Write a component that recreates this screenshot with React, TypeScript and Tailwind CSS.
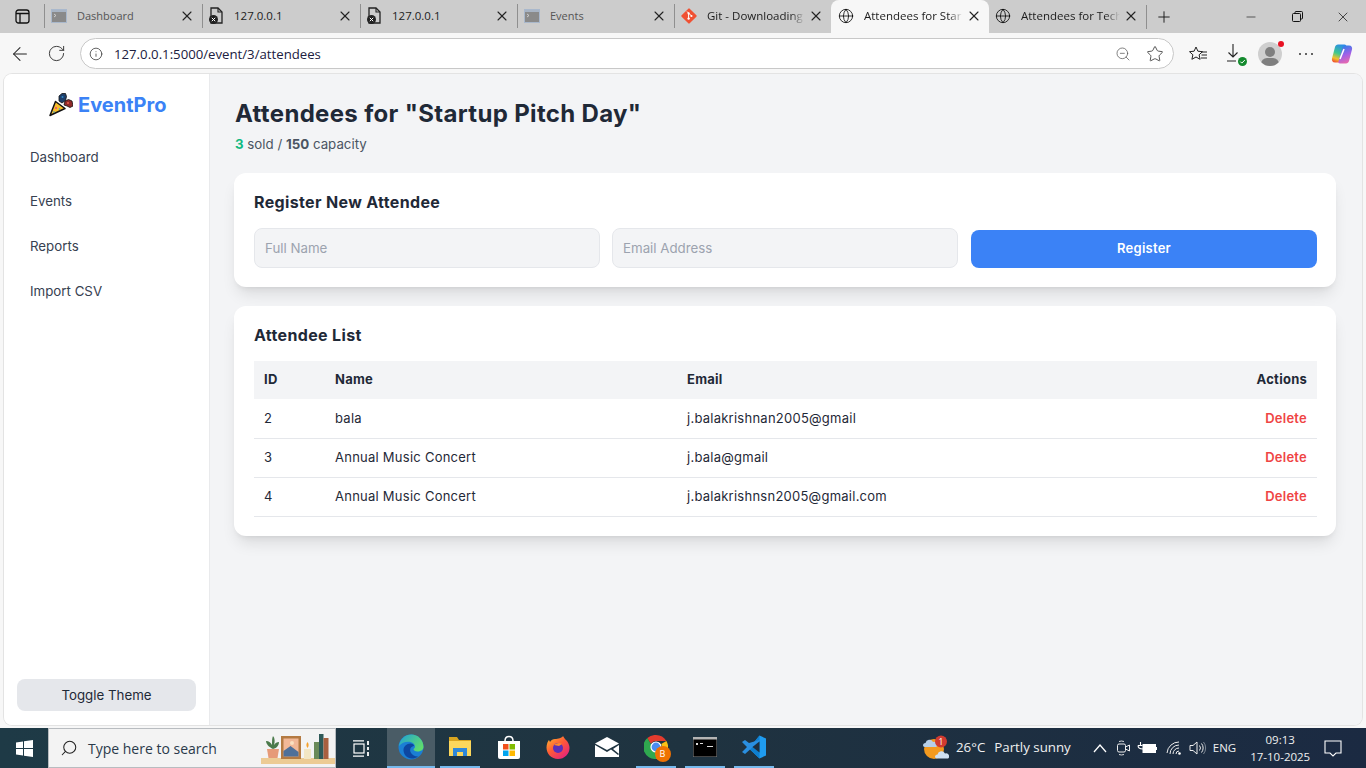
import { ArrowLeft, RotateCw, Info, ZoomOut, Star, X, Plus, Minus, Globe, Search } from 'lucide-react'

const ui = "font-['Open_Sans',sans-serif]"
const page = "font-['Inter',sans-serif]"

function TermIcon() {
  return (
    <svg width="16" height="14" viewBox="0 0 16 14">
      <rect x="0.5" y="0.5" width="15" height="13" fill="#8a8a8a" stroke="#a9b8cc" />
      <rect x="1" y="1" width="14" height="2" fill="#a8b4c4" />
      <path d="M3 5l2 1.5L3 8" stroke="#ddd" fill="none" strokeWidth="0.8" />
    </svg>
  )
}

function FileErrIcon() {
  return (
    <svg width="16" height="18" viewBox="0 0 16 18">
      <path d="M3 1h7l4 4v11H3z" fill="none" stroke="#222" strokeWidth="1.3" />
      <path d="M10 1v4h4" fill="none" stroke="#222" strokeWidth="1.1" />
      <circle cx="5.5" cy="12.5" r="4.5" fill="#222" />
      <path d="M3.8 10.8l3.4 3.4M7.2 10.8l-3.4 3.4" stroke="#fff" strokeWidth="1" />
    </svg>
  )
}

function GitIcon() {
  return (
    <svg width="16" height="16" viewBox="0 0 16 16">
      <rect x="2.3" y="2.3" width="11.4" height="11.4" rx="1" fill="#f05133" transform="rotate(45 8 8)" />
      <path d="M6 3.5l4.2 4.2M7.6 5.6v5" stroke="#fff" strokeWidth="1" />
      <circle cx="7.6" cy="5.4" r="1.1" fill="#fff" />
      <circle cx="7.6" cy="10.6" r="1.2" fill="#fff" />
      <circle cx="10.4" cy="8" r="1.1" fill="#fff" />
    </svg>
  )
}

type TabInfo = { title: string; icon: React.ReactNode; muted?: boolean; active?: boolean; fade?: boolean; iconCls: string; w: string }

const tabs: TabInfo[] = [
  { title: 'Dashboard', icon: <TermIcon />, muted: true, iconCls: 'pl-[6px]', w: 'w-[158px]' },
  { title: '127.0.0.1', icon: <FileErrIcon />, iconCls: 'pl-[5px]', w: 'w-[158px]' },
  { title: '127.0.0.1', icon: <FileErrIcon />, iconCls: 'pl-[5px]', w: 'w-[157px]' },
  { title: 'Events', icon: <TermIcon />, muted: true, iconCls: 'pl-[6px]', w: 'w-[157px]' },
  { title: 'Git - Downloading', icon: <GitIcon />, fade: true, iconCls: 'pl-[6px]', w: 'w-[157px]' },
  { title: 'Attendees for Star', icon: <Globe size={18} strokeWidth={1.2} />, active: true, fade: true, iconCls: 'pl-[6px]', w: 'w-[158px]' },
  { title: 'Attendees for Tech', icon: <Globe size={18} strokeWidth={1.2} />, fade: true, iconCls: 'pl-[5px]', w: 'w-[157px]' },
]

function Tab({ t, noLine }: { t: TabInfo; noLine: boolean }) {
  return (
    <div className={`${t.w} h-[33px] flex items-center shrink-0 ${t.active ? 'bg-[#f7f7f7] rounded-t-lg' : ''}`}>
      <div className={`flex-1 min-w-0 h-[24px] mt-[-1px] flex items-center pr-[7px] ${t.iconCls} ${noLine ? 'border-l border-transparent' : 'border-l border-[#8f8f8f]'}`}>
        <span className="w-[16px] flex justify-center shrink-0">{t.icon}</span>
        <span className={`flex-1 min-w-0 whitespace-nowrap ${t.muted ? 'ml-[10px] text-[11px] text-[#555]' : 'ml-[10px] text-[11.5px] text-[#1c1c1c]'} ${t.fade ? '[mask-image:linear-gradient(to_right,black_85%,transparent)]' : ''}`}>{t.title}</span>
        <X size={16} strokeWidth={1.6} className="shrink-0 ml-[3px] text-[#222]" />
      </div>
    </div>
  )
}

function PartyLogo() {
  return (
    <svg width="24" height="24" viewBox="0 0 24 24">
      <path d="M6.500 8.500L16 15.500 1 22.500z" fill="#f8bd2a" stroke="#111" strokeWidth="1.500" strokeLinejoin="round" />
      <circle cx="7" cy="15" r="0.9" fill="#e8388a" />
      <circle cx="5" cy="19" r="0.8" fill="#2a9fd8" />
      <circle cx="10.500" cy="16" r="0.8" fill="#2a9fd8" />
      <path d="M10 3l3-2.500h3.500l1 3-1 4-3.500 2.500-3-2z" fill="#1f3f6b" stroke="#111" strokeWidth="0.800" />
      <path d="M15 12l1-4 3.500-1.500 3.500 1.500 1 5-3 1.500-3-1.500z" fill="#8f2a2a" stroke="#111" strokeWidth="0.800" />
      <circle cx="19" cy="10" r="1" fill="#e8604c" />
      <circle cx="13.500" cy="4" r="1" fill="#2f88c8" />
    </svg>
  )
}

const navItems = [
  { label: 'Dashboard', cls: 'h-[44px] pt-[2px]' },
  { label: 'Events', cls: 'h-[45px]' },
  { label: 'Reports', cls: 'h-[45px]' },
  { label: 'Import CSV', cls: 'h-[45px]' },
]

const attendees = [
  { id: 2, name: 'bala', email: 'j.balakrishnan2005@gmail', h: 'h-[39px]' },
  { id: 3, name: 'Annual Music Concert', email: 'j.bala@gmail', h: 'h-[39px]' },
  { id: 4, name: 'Annual Music Concert', email: 'j.balakrishnsn2005@gmail.com', h: 'h-[39px]' },
]

function Sidebar() {
  return (
    <aside className="w-[206px] shrink-0 bg-white border-r border-[#e9eaec] flex flex-col">
      <div className="h-[61px] pt-[19px] pl-[45px] flex items-start gap-[5px]">
        <PartyLogo />
        <span className="text-[20px] leading-[25px] font-bold text-[#3b82f6]">EventPro</span>
      </div>
      <nav className="pl-[26px] flex flex-col">
        {navItems.map(n => (
          <div key={n.label} className={`${n.cls} flex items-center text-[13.3px] text-[#374151]`}>{n.label}</div>
        ))}
      </nav>
      <div className="mt-auto px-[13px] pb-[14px]">
        <button className="w-full h-[32px] pt-[1px] rounded-lg bg-[#e5e7eb] text-[13.3px] text-[#1f2937]">Toggle Theme</button>
      </div>
    </aside>
  )
}

function Main() {
  return (
    <main className="flex-1 min-w-0 bg-[#f3f4f6] pl-[24px] pr-[26px] pt-[25px]">
      <h1 className="ml-[1px] text-[24px] leading-[30px] font-bold text-[#1f2937] tracking-[0.33px]">Attendees for "Startup Pitch Day"</h1>
      <p className="ml-[1px] mt-[5px] text-[13.3px] leading-[20px] text-[#4b5563]">
        <span className="font-bold text-[#10b981]">3</span> sold / <span className="font-bold">150</span> capacity
      </p>
      <section className="mt-[19px] bg-white rounded-xl shadow-lg h-[114px] pl-[20px] pr-[19px] pt-[18px]">
        <h2 className="text-[16px] leading-[22px] font-bold text-[#1f2937] tracking-[0.35px]">Register New Attendee</h2>
        <div className="mt-[15px] flex items-end">
          <input readOnly placeholder="Full Name" className="w-[346px] h-[40px] px-[10px] rounded-lg bg-[#f3f4f6] border border-[#e5e7eb] text-[13.3px] placeholder:text-[#9ca3af]" />
          <input readOnly placeholder="Email Address" className="ml-[12px] w-[346px] h-[40px] px-[10px] rounded-lg bg-[#f3f4f6] border border-[#e5e7eb] text-[13.3px] placeholder:text-[#9ca3af]" />
          <button className="ml-[13px] w-[346px] h-[38px] rounded-lg bg-[#3b82f6] text-white text-[13px] font-semibold tracking-[0.25px]">Register</button>
        </div>
      </section>
      <section className="mt-[19px] bg-white rounded-xl shadow-lg h-[230px] px-[20px] pt-[18px]">
        <h2 className="text-[16px] leading-[22px] font-bold text-[#1f2937] tracking-[0.35px]">Attendee List</h2>
        <table className="mt-[15px] w-[1063px] table-fixed text-[13px] tracking-[0.25px] border-collapse">
          <thead>
            <tr className="bg-[#f3f4f6] h-[38px] text-[#1f2937]">
              <th className="w-[81px] pl-[10px] text-left font-bold">ID</th>
              <th className="w-[352px] text-left font-bold">Name</th>
              <th className="text-left font-bold">Email</th>
              <th className="w-[120px] pr-[10px] text-right font-bold">Actions</th>
            </tr>
          </thead>
          <tbody>
            {attendees.map(a => (
              <tr key={a.id} className={`${a.h} border-b border-[#e5e7eb] text-[#1f2937]`}>
                <td className="pl-[10px]">{a.id}</td>
                <td>{a.name}</td>
                <td>{a.email}</td>
                <td className="pr-[10px] text-right font-semibold text-[#ef4444]">Delete</td>
              </tr>
            ))}
          </tbody>
        </table>
      </section>
    </main>
  )
}

function EdgeIcon() {
  return (
    <svg width="26" height="26" viewBox="0 0 26 26">
      <defs>
        <linearGradient id="edgeTop" x1="0" y1="0" x2="1" y2="0.6">
          <stop offset="0" stopColor="#1f9fd8" />
          <stop offset="1" stopColor="#5fdc6e" />
        </linearGradient>
      </defs>
      <circle cx="13" cy="13" r="12.500" fill="#1b7fd4" />
      <path d="M1 12C2 5 7 .5 13.500 .5 20 .5 25.500 6 25.500 13c0 3-3 4.500-6 4.500-2.500 0-4-1-4-2.500 2-1 2-3.500 0-5.500-3-3-11-2.500-14.500 2.500z" fill="url(#edgeTop)" />
      <path d="M5.500 16c0-3.500 3-6.500 7-6.500 2 0 3.500 1 3.500 2.500-3 .5-4.500 2.500-3.500 6 1 2.500 4 4.500 7.500 4.500-2 1.500-4 2-6 2-5 0-8.500-4-8.500-8.500z" fill="#0d47a1" />
    </svg>
  )
}

function FolderIcon() {
  return (
    <svg width="24" height="22" viewBox="0 0 24 22">
      <path d="M1 1h8l2 3h12v16H1z" fill="#d9a520" />
      <rect x="1" y="5" width="22" height="15" fill="#fbd75c" />
      <path d="M5 12h14v8h-4v-4H9v4H5z" fill="#2f88d8" />
    </svg>
  )
}

function StoreIcon() {
  return (
    <svg width="24" height="24" viewBox="0 0 24 24">
      <path d="M8 6c0-6 8-6 8 0" fill="none" stroke="#fff" strokeWidth="1.5" />
      <path d="M1 6h22v16a2 2 0 0 1-2 2H3a2 2 0 0 1-2-2z" fill="#fff" />
      <rect x="6" y="9" width="5.500" height="5.500" fill="#f1501b" />
      <rect x="12.500" y="9" width="5.500" height="5.500" fill="#80bb01" />
      <rect x="6" y="15.500" width="5.500" height="5.500" fill="#01a4ef" />
      <rect x="12.500" y="15.500" width="5.500" height="5.500" fill="#ffb902" />
    </svg>
  )
}

function FirefoxIcon() {
  return (
    <svg width="24" height="24" viewBox="0 0 24 24">
      <defs>
        <linearGradient id="ff" x1="0" y1="0" x2="0.8" y2="1">
          <stop offset="0" stopColor="#ffbd2e" />
          <stop offset="0.5" stopColor="#ff5a36" />
          <stop offset="1" stopColor="#e5207f" />
        </linearGradient>
      </defs>
      <path d="M17 1c1 2 2 3 4 5 2 3 2.500 5 2.500 7 0 6-5 11-11.500 11S.5 19 .5 12.500C.5 9 2 6 3 5l1 2c1-2 3-3 5-3 3 0 7-1 8-3z" fill="url(#ff)" />
      <circle cx="12" cy="13" r="5" fill="#5b2fb8" />
      <path d="M8 10c2-2 6-3 8-1l-3 2z" fill="#ff8a2a" />
    </svg>
  )
}

function MailIcon() {
  return (
    <svg width="24" height="20" viewBox="0 0 24 20">
      <path d="M0 6.500L12 0l12 6.500L12 13z" fill="#fff" />
      <path d="M0 8l12 7 4-2.500 7 5.500 1-1V20H0z" fill="#fff" />
      <path d="M24 8v9l-6-5z" fill="#fff" />
    </svg>
  )
}

function ChromeIcon() {
  return (
    <div className="relative w-[24px] h-[24px]">
      <svg width="24" height="24" viewBox="0 0 24 24">
        <path d="M12 0a12 12 0 0 1 10.400 6H12a6 6 0 0 0-5.200 3L3.300 3A12 12 0 0 1 12 0z" fill="#e33b2e" />
        <path d="M22.400 6A12 12 0 0 1 12 24l5.200-9a6 6 0 0 0 0-6z" fill="#fbc116" />
        <path d="M12 24A12 12 0 0 1 3.300 3l5 8.500a6 6 0 0 0 5 4.300z" fill="#2fa84f" />
        <circle cx="12" cy="12" r="5" fill="#4a8cf0" stroke="#fff" strokeWidth="1.200" />
      </svg>
      <div className="absolute right-[-3px] bottom-[-3px] w-[16px] h-[16px] rounded-full bg-[#ef7203] text-white text-[9px] flex items-center justify-center">B</div>
    </div>
  )
}

function CmdIcon() {
  return (
    <svg width="24" height="20" viewBox="0 0 24 20">
      <rect width="24" height="20" fill="#000" stroke="#888" />
      <rect width="24" height="2.500" fill="#b5b5b5" />
      <path d="M3 6h2v2H3zM7 6h3v1H7zM14 9h6v1h-6z" fill="#ddd" />
    </svg>
  )
}

function VsCodeIcon() {
  return (
    <svg width="24" height="24" viewBox="0 0 24 24">
      <path d="M17.500 0.500L24 3.500v17l-6.500 3L7 13.500l10.500-13z" fill="#1f9cf0" />
      <path d="M17.500 0.500v23L7 13.500z" fill="#0e7fd0" />
      <path d="M7 8l-4-3-3 2 5 5-5 5 3 2 14.500-13V5z" fill="#2a8fe0" />
      <path d="M17.500 6.500L10.500 12l7 5.500z" fill="#1f2f3d" />
    </svg>
  )
}

function Shelf() {
  return (
    <svg width="74" height="32" viewBox="0 0 74 32">
      <rect x="0" y="25" width="74" height="6" fill="#eccb94" />
      <path d="M6 16h12l-1.500 9h-9z" fill="#e69a78" />
      <path d="M12 16C8 14 5 11 5 8c3 0 5 2 6 4 0-4 0-7 1-9 2 2 2 6 1 9 1-2 3-3 5-3 0 3-2 6-6 7z" fill="#4b7a4b" />
      <rect x="20" y="3" width="20" height="23" fill="#b47a42" />
      <rect x="22.500" y="5.500" width="15" height="18" fill="#f2b897" />
      <path d="M22.500 18l7-5 8 6v4.500h-15z" fill="#4f7099" />
      <circle cx="31" cy="10" r="2" fill="#fbe0c0" />
      <rect x="43" y="16" width="7" height="10" fill="#f2e6c4" />
      <path d="M46.500 9c-1.500 2-1.500 4 0 6 1.500-2 1.500-4 0-6z" fill="#f6a12c" />
      <rect x="53" y="9" width="5" height="17" fill="#6a8a58" />
      <rect x="58" y="1" width="4.500" height="25" fill="#2f5a58" />
      <rect x="62.500" y="5" width="5" height="21" fill="#a8603f" />
    </svg>
  )
}

function WeatherIcon() {
  return (
    <svg width="26" height="26" viewBox="0 0 26 26">
      <circle cx="11" cy="14" r="10" fill="#f39a1f" />
      <path d="M0 10.500a2.500 2.500 0 0 1 2.500-2.500 4 4 0 0 1 7.500-1 3 3 0 0 1 4 3.500 1.500 1.500 0 0 1-1 1.500H2a2 2 0 0 1-2-1.500z" fill="#b7cfe8" />
      <path d="M12 22a2.500 2.500 0 0 1 2.500-2.500 4 4 0 0 1 7.500-1 3 3 0 0 1 4 3.500 1.500 1.500 0 0 1-1 1.500H14a2 2 0 0 1-2-1.500z" fill="#cfe0f2" />
      <circle cx="18" cy="6.500" r="6" fill="#d23b30" />
      <text x="18" y="9.500" textAnchor="middle" fontSize="8.500" fill="#fff">1</text>
    </svg>
  )
}

function TrayIcons() {
  return (
    <>
      <svg width="14" height="11" viewBox="0 0 14 11" className="ml-[22px]" fill="none" stroke="#fff" strokeWidth="1.300">
        <path d="M1 9L7 2l6 7" />
      </svg>
      <svg width="18" height="18" viewBox="0 0 18 18" className="ml-[8px]" fill="none" stroke="#eee" strokeWidth="1">
        <rect x="2.500" y="5" width="8" height="8" rx="1.500" />
        <path d="M10.500 8l4-2v6l-4-2" />
        <path d="M4 2.500a7 7 0 0 1 5 0M4 15.500a7 7 0 0 0 5 0" strokeWidth="0.9" />
      </svg>
      <svg width="20" height="14" viewBox="0 0 20 14" className="ml-[4px]" fill="none" stroke="#fff">
        <rect x="6" y="3.500" width="12.500" height="8" fill="#fff" />
        <path d="M19.500 6v3" />
        <path d="M1 4.500h4.500M3.500 1v3M1 4.500c0 3 2 3.500 5 3.500" strokeWidth="1.100" />
      </svg>
      <svg width="17" height="16" viewBox="0 0 17 16" className="ml-[9px]" fill="none" stroke="#eee" strokeWidth="1">
        <path d="M1 13A12 12 0 0 1 13 2" />
        <path d="M4 14a9 9 0 0 1 9-9" />
        <path d="M7 14a6 6 0 0 1 6-6" />
        <path d="M10 14a3 3 0 0 1 3-3" />
        <circle cx="13.500" cy="13.500" r="1.300" fill="#fff" stroke="none" />
      </svg>
      <svg width="18" height="16" viewBox="0 0 18 16" className="ml-[6px]" fill="none" stroke="#eee" strokeWidth="1">
        <path d="M1 5.500h3L8 2v12l-4-3.500H1z" />
        <path d="M10.500 5.500a4 4 0 0 1 0 5" />
        <path d="M12.500 3.500a7 7 0 0 1 0 9" />
        <path d="M14.500 2a9.500 9.500 0 0 1 0 12" stroke="#7c8794" />
      </svg>
    </>
  )
}

function Taskbar() {
  const slots = [
    { el: <FolderIcon />, on: true },
    { el: <StoreIcon />, on: false },
    { el: <FirefoxIcon />, on: false },
    { el: <MailIcon />, on: false },
    { el: <ChromeIcon />, on: true },
    { el: <CmdIcon />, on: true },
    { el: <VsCodeIcon />, on: true },
  ]
  return (
    <div className={`h-[40px] flex items-stretch bg-gradient-to-r from-[#1e3a46] via-[#1f3340] to-[#1b2a42] text-white ${ui}`}>
      <div className="w-[48px] flex items-center justify-center">
        <svg width="17" height="17" viewBox="0 0 17 17" fill="#fff">
          <path d="M0 2.500L7 1.500V8H0zM8 1.300L17 0v8H8zM0 9h7v6.500L0 14.500zM8 9h9v8l-9-1.300z" />
        </svg>
      </div>
      <div className="w-[288px] bg-[#f3f3f3] border border-[#b8bcc0] flex items-center pl-[11px] overflow-hidden">
        <Search size={18} strokeWidth={1.4} className="text-[#222] -scale-x-100" />
        <span className="ml-[10px] text-[14px] text-[#2a3a4a]">Type here to search</span>
        <div className="ml-auto mt-[2px] h-[32px]"><Shelf /></div>
      </div>
      <div className="w-[51px] flex items-center justify-center">
        <svg width="17" height="17" viewBox="0 0 17 17" fill="none" stroke="#fff" strokeWidth="1.200">
          <path d="M0 0.800h11M0 16.200h11" />
          <rect x="1" y="4" width="10" height="9" />
          <path d="M15 1v4M15 7v3M15 12v4" strokeWidth="1.800" />
        </svg>
      </div>
      <div className="w-[48px] bg-[#4a5c66] border-b-[2px] border-[#76b9ed] flex items-center justify-center"><EdgeIcon /></div>
      {slots.map((s, i) => (
        <div key={i} className="w-[49px] flex justify-center">
          <div className={`w-[40px] flex items-center justify-center border-b-[2px] ${s.on ? 'border-[#76b9ed]' : 'border-transparent'}`}>{s.el}</div>
        </div>
      ))}
      <div className="flex-1" />
      <div className="flex items-center w-[443px] text-[13.300px] text-[#f0f0f0] whitespace-nowrap">
        <WeatherIcon />
        <span className="ml-[7px]">26°C</span>
        <span className="ml-[9px]">Partly sunny</span>
        <TrayIcons />
        <span className="ml-[6px] text-[11.500px]">ENG</span>
        <div className="ml-[12px] w-[64px] text-center text-[11.500px] leading-[17px]">
          <div>09:13</div>
          <div>17-10-2025</div>
        </div>
        <svg width="18" height="17" viewBox="0 0 18 17" className="ml-[12px]" fill="none" stroke="#fff" strokeWidth="1.100">
          <path d="M1 1h16v12h-5l-3 3-3-3H1z" />
        </svg>
      </div>
    </div>
  )
}

function Toolbar() {
  return (
    <div className={`h-[41px] bg-[#f7f7f7] flex items-center ${ui}`}>
      <div className="w-[40px] flex justify-center"><ArrowLeft size={22} strokeWidth={1.1} className="text-[#222]" /></div>
      <div className="w-[32px] flex justify-center"><RotateCw size={19} strokeWidth={1.1} className="text-[#222]" /></div>
      <div className="ml-[8px] w-[1094px] h-[31px] bg-white border border-[#c8c8c8] rounded-full flex items-center pl-[8px] pr-[9px]">
        <Info size={14} strokeWidth={1.3} className="text-[#333]" />
        <span className="ml-[11px] mt-[2px] text-[13.200px] text-[#202040]">127.0.0.1:5000/event/3/attendees</span>
        <ZoomOut size={16} strokeWidth={1.1} className="ml-auto text-[#555]" />
        <Star size={18} strokeWidth={1.1} className="ml-[15px] text-[#333]" />
      </div>
      <div className="ml-[15px] w-[18px] h-[16px] flex">
        <svg width="18" height="16" viewBox="0 0 18 16" fill="none" stroke="#222" strokeWidth="1">
          <path d="M7 1l1.900 4.200 4.600 0.500-3.400 3.100 1 4.500L7 11l-4.100 2.300 1-4.500L0.500 5.700l4.600-0.500z" />
          <path d="M12 6h6M12.500 9h5.500M12 12h6" />
        </svg>
      </div>
      <div className="ml-[19px] w-[18px] h-[22px] relative">
        <svg width="16" height="20" viewBox="0 0 16 20" fill="none" stroke="#222" strokeWidth="1.100"><path d="M7 1v13M2.500 9.500L7 14l4.500-4.500M1 18h9" /></svg>
        <svg width="9" height="9" viewBox="0 0 9 9" className="absolute right-[-3px] bottom-[-1px]">
          <circle cx="4.500" cy="4.500" r="4.500" fill="#148a2e" />
          <path d="M2.300 4.600l1.500 1.500 3-3" fill="none" stroke="#fff" strokeWidth="1" />
        </svg>
      </div>
      <div className="ml-[14px] w-[24px] h-[24px] relative">
        <div className="w-full h-full rounded-full bg-[#cfcfcf] overflow-hidden relative">
          <div className="absolute left-[7px] top-[5px] w-[10px] h-[10px] rounded-full bg-[#7f7f7f]" />
          <div className="absolute left-[3px] top-[16px] w-[18px] h-[12px] rounded-full bg-[#7f7f7f]" />
        </div>
        <div className="absolute right-[-2px] top-[-1px] w-[6px] h-[6px] rounded-full bg-[#e81123]" />
      </div>
      <div className="ml-[17px] w-[14px] flex justify-between">
        <span className="w-[2px] h-[2px] bg-[#333] rounded-full" />
        <span className="w-[2px] h-[2px] bg-[#333] rounded-full" />
        <span className="w-[2px] h-[2px] bg-[#333] rounded-full" />
      </div>
      <div className="ml-[18px] w-[22px] h-[22px]">
        <svg width="22" height="22" viewBox="0 0 22 22">
          <defs>
            <linearGradient id="copL" x1="0.600" y1="0" x2="0.300" y2="1">
              <stop offset="0" stopColor="#2a8ce8" />
              <stop offset="0.5" stopColor="#3fc88f" />
              <stop offset="0.800" stopColor="#f2c12e" />
              <stop offset="1" stopColor="#f0562e" />
            </linearGradient>
            <linearGradient id="copR" x1="0.400" y1="0" x2="0.700" y2="1">
              <stop offset="0" stopColor="#2f7fe8" />
              <stop offset="0.500" stopColor="#a060e8" />
              <stop offset="1" stopColor="#f06aa8" />
            </linearGradient>
          </defs>
          <path d="M7 1.500h6.500c1.500 0 2 1 1.500 2L11 16c-.5 2-2 3.500-4 3.500H4c-2.500 0-3.500-2-3-4L4 4c.4-1.500 1.500-2.500 3-2.500z" fill="url(#copL)" />
          <path d="M15 20.500H9c-1.500 0-2-1-1.500-2L11 6c.5-2 2-3.500 4-3.500h3c2.500 0 3.500 2 3 4l-3 11.500c-.4 1.500-1.500 2.500-3 2.500z" fill="url(#copR)" />
          <path d="M13 6l-4 10" stroke="#fff" strokeWidth="1.500" />
        </svg>
      </div>
    </div>
  )
}

export default function App() {
  return (
    <div className="w-[1366px] h-[768px] overflow-hidden flex flex-col bg-[#f7f7f7]">
      <div className={`h-[33px] bg-[#cccccc] flex items-center ${ui}`}>
        <div className="w-[44px] flex justify-center">
          <svg width="15" height="15" viewBox="0 0 15 15" fill="none" stroke="#111" strokeWidth="1.300">
            <rect x="1" y="1" width="13" height="13" rx="2.500" />
            <path d="M1 4.500h13M5 4.500V14" />
          </svg>
        </div>
        {tabs.map((t, i) => <Tab key={i} t={t} noLine={!!t.active || i === 6} />)}
        <div className="w-[34px] h-[24px] border-l border-[#8f8f8f] flex items-center justify-center"><Plus size={18} strokeWidth={1.2} className="text-[#111]" /></div>
        <div className="ml-auto flex items-center">
          <div className="w-[46px] flex justify-center"><Minus size={14} strokeWidth={1} /></div>
          <div className="w-[46px] flex justify-center">
            <svg width="11" height="11" viewBox="0 0 11 11" fill="none" stroke="#111"><rect x="0.500" y="2.500" width="8" height="8" rx="1" /><path d="M3 2.500V1.500a1 1 0 0 1 1-1h5.500a1 1 0 0 1 1 1V7a1 1 0 0 1-1 1H8.500" /></svg>
          </div>
          <div className="w-[46px] flex justify-center"><X size={16} strokeWidth={1} /></div>
        </div>
      </div>
      <Toolbar />
      <div className="flex-1 min-h-0 flex pl-[4px] pr-[4px] pb-[3px]">
        <div className={`flex-1 flex rounded-lg overflow-hidden ring-1 ring-[#e3e3e3] ${page}`}>
          <Sidebar />
          <Main />
        </div>
      </div>
      <Taskbar />
    </div>
  )
}
